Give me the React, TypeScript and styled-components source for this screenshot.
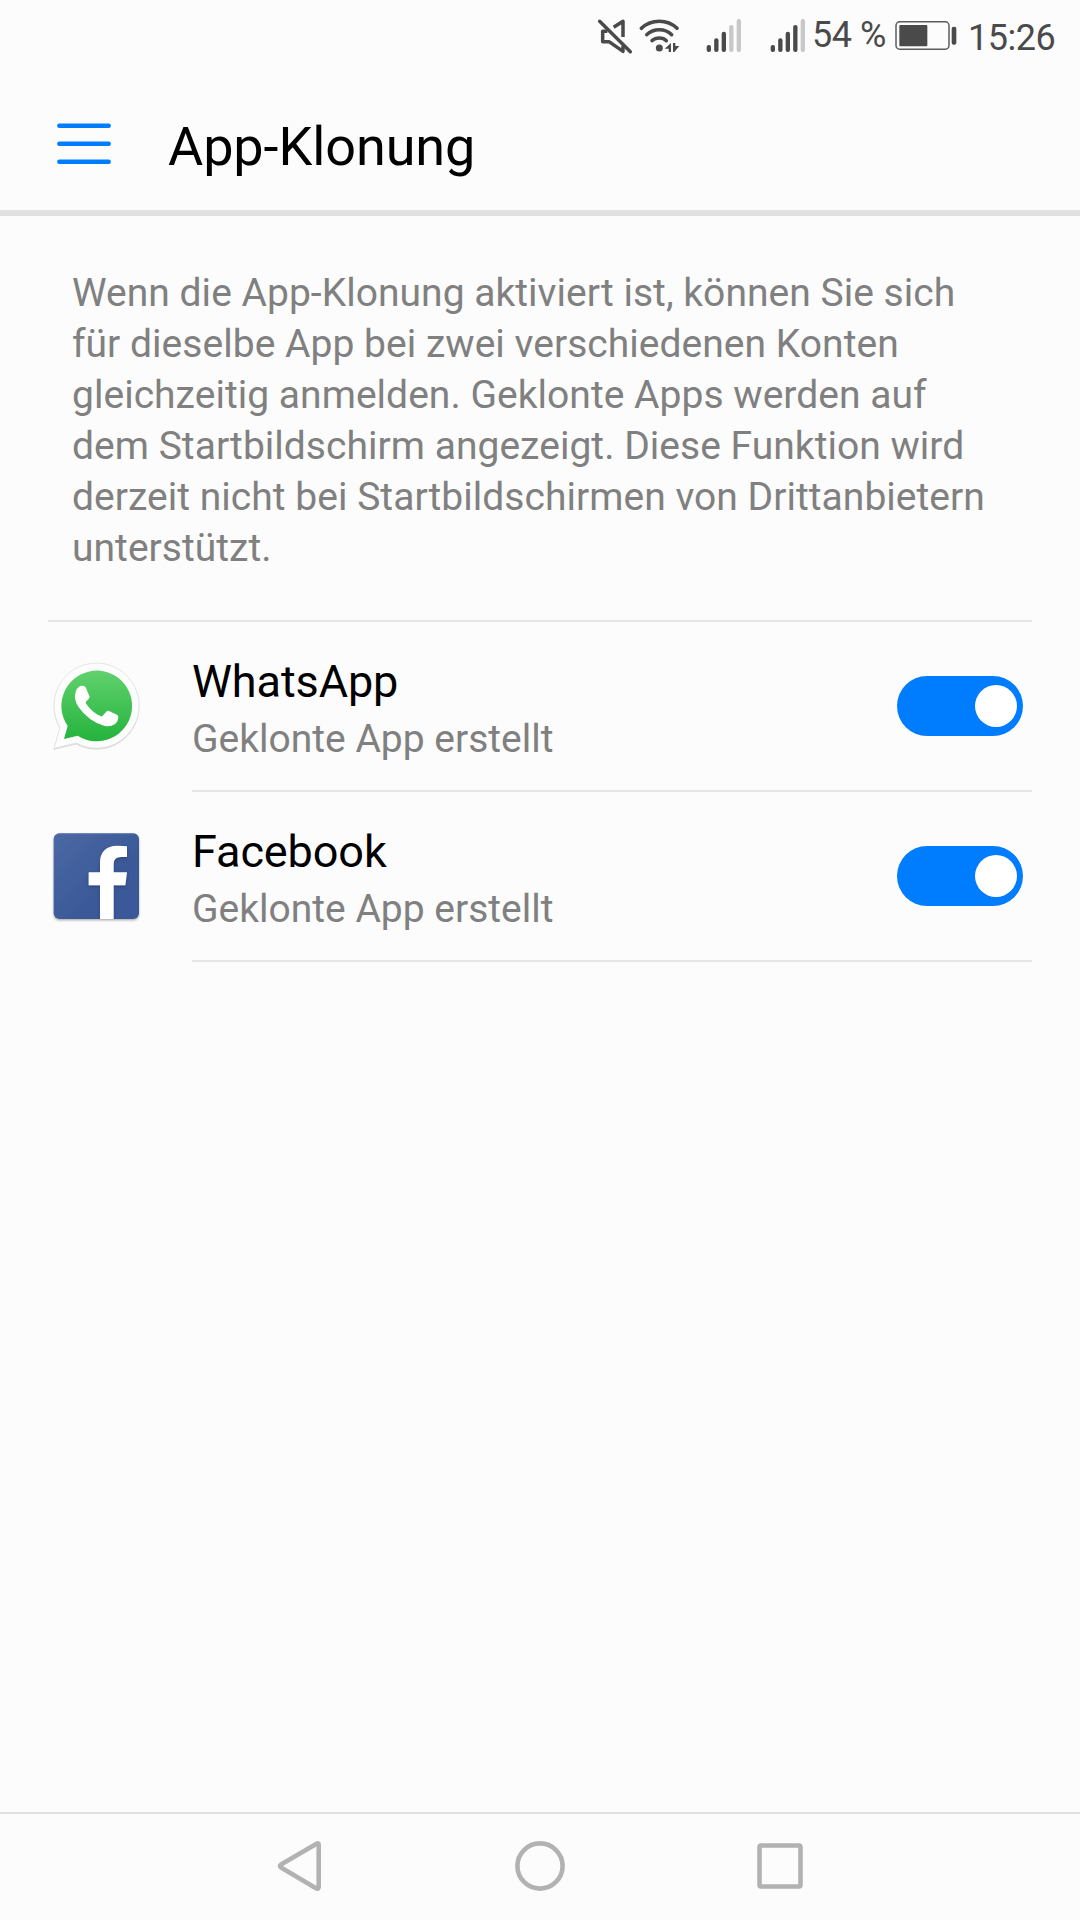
import React, { useState } from 'react';
import styled, { createGlobalStyle } from 'styled-components';

const ink = '#4a4a4a';
const blue = '#007dff';

const GlobalStyle = createGlobalStyle`
  html, body { margin: 0; padding: 0; background: #fcfcfc; }
  * { box-sizing: border-box; }
`;

const Screen = styled.div`
  display: flex;
  flex-direction: column;
  width: 1080px;
  height: 1920px;
  overflow: hidden;
  background: #fcfcfc;
  font-family: Roboto, 'Liberation Sans', sans-serif;
`;

const StatusBar = styled.div`
  display: flex;
  align-items: center;
  height: 72px;
  padding-left: 597px;
  flex: none;
  color: ${ink};
`;

const StatusIcon = styled.svg<{ $w: number; $gap: number }>`
  display: block;
  flex: none;
  width: ${(p) => p.$w}px;
  height: 40px;
  margin-right: ${(p) => p.$gap}px;
`;

const StatusText = styled.span<{ $w: number; $lift?: number; $drop?: number; $spacing?: number }>`
  flex: none;
  width: ${(p) => p.$w}px;
  padding-top: ${(p) => p.$drop ?? 0}px;
  padding-bottom: ${(p) => p.$lift ?? 0}px;
  font-size: 36px;
  line-height: 42px;
  letter-spacing: ${(p) => p.$spacing ?? 0}px;
  white-space: pre;
`;

const Header = styled.header`
  display: flex;
  align-items: flex-start;
  flex: none;
  height: 144px;
  padding: 43px 57px 0;
  border-bottom: 6px solid #e1e1e1;
`;

const MenuButton = styled.button`
  width: 54px;
  height: 54px;
  margin: 0 57px 0 0;
  padding: 0;
  border: 0;
  background: none;

  svg { display: block; }
`;

const Title = styled.h1`
  margin: 0;
  font-size: 54px;
  font-weight: 400;
  line-height: 64px;
  letter-spacing: -0.1px;
  color: #000;
`;

const Content = styled.main`
  flex: 1;
  padding: 0 48px;
`;

const Description = styled.p`
  margin: 0;
  padding: 52px 24px 46px;
  border-bottom: 2px solid #e6e6e6;
  font-size: 39px;
  line-height: 51px;
  letter-spacing: 0.03px;
  color: #808080;
`;

const AppRow = styled.div`
  display: flex;
  align-items: center;
  height: 170px;
`;

const AppIcon = styled.svg`
  display: block;
  flex: none;
  width: 96px;
  height: 96px;
  margin: 0 48px 2px 0;
`;

const RowBody = styled.div`
  display: flex;
  flex: 1;
  align-items: center;
  justify-content: space-between;
  height: 170px;
  padding-right: 9px;
  border-bottom: 2px solid #e6e6e6;
`;

const RowText = styled.div`
  display: flex;
  flex-direction: column;
  gap: 7px;
  height: 102px;
`;

const AppName = styled.div`
  font-size: 45px;
  line-height: 54px;
  letter-spacing: -0.1px;
  color: #000;
`;

const AppState = styled.div`
  font-size: 39px;
  line-height: 46px;
  color: #808080;
`;

const Switch = styled.button<{ $on: boolean }>`
  display: flex;
  align-items: center;
  justify-content: ${(p) => (p.$on ? 'flex-end' : 'flex-start')};
  width: 126px;
  height: 60px;
  padding: 0 6px;
  border: 0;
  border-radius: 30px;
  background: ${(p) => (p.$on ? blue : '#c8c8c8')};
`;

const Knob = styled.span`
  width: 42px;
  height: 42px;
  border-radius: 50%;
  background: #fff;
`;

const NavBar = styled.nav`
  display: flex;
  flex: none;
  height: 108px;
  padding: 0 180px 2px;
  border-top: 2px solid #e1e1e1;
`;

const NavButton = styled.button`
  display: flex;
  flex: 1;
  align-items: center;
  justify-content: center;
  padding: 0;
  border: 0;
  background: none;

  svg { width: 60px; height: 60px; fill: none; stroke: #b2b2b2; stroke-width: 4.6; stroke-linejoin: round; }
`;

function MuteIcon() {
  return (
    <StatusIcon $w={36} $gap={6} viewBox="51 48 108 120" fill="none" stroke={ink} strokeWidth="10.500" strokeLinejoin="round">
      <path d="M59 64L151 155" strokeLinecap="round" />
      <path d="M82 94H68V125H87L129 154V137" />
      <path d="M101 82L129 64V111" />
    </StatusIcon>
  );
}

function WifiIcon() {
  return (
    <StatusIcon $w={42} $gap={24} viewBox="177 48 126 120" fill="none" stroke={ink} strokeWidth="10.500" strokeLinecap="round">
      <path d="M184 85Q207 64 238 64T291 85" />
      <path d="M200 104Q216 89 238 89T275 104" />
      <path d="M216 122Q225 114 238 114T259 122" />
      <circle cx="238" cy="144" r="10.5" fill={ink} stroke="none" />
      <path d="M273 129V156H266V146H254ZM279 129H286V138H298L283 156H279Z" fill={ink} stroke="none" />
    </StatusIcon>
  );
}

function SignalIcon({ level, gap }: { level: number; gap: number }) {
  const tops = [135, 115, 95, 75, 57];
  return (
    <StatusIcon $w={38} $gap={gap} viewBox="375 48 114 120">
      {tops.map((top, i) => (
        <rect key={top} x={380 + i * 22.5} y={top} width="13" height={156 - top} rx="6" fill={i < level ? ink : '#c8c8c8'} />
      ))}
    </StatusIcon>
  );
}

function BatteryIcon() {
  return (
    <StatusIcon $w={62} $gap={11} viewBox="286 48 186 120">
      <rect x="289" y="65.5" width="159" height="82" rx="11" fill="none" stroke="#5c5c5c" strokeWidth="4.500" />
      <rect x="299" y="75" width="84" height="64" rx="3" fill={ink} />
      <rect x="456" y="80" width="14" height="54" rx="6" fill={ink} />
    </StatusIcon>
  );
}

function WhatsAppIcon() {
  return (
    <AppIcon viewBox="54 54 288 288">
      <defs>
        <linearGradient id="waGreen" x1="0" y1="0" x2="0" y2="1">
          <stop offset="0" stopColor="#61d16e" />
          <stop offset="1" stopColor="#24b33c" />
        </linearGradient>
        <filter id="waShadow" x="-10%" y="-10%" width="120%" height="125%">
          <feDropShadow dx="0" dy="2" stdDeviation="2" floodColor="#000" floodOpacity="0.28" />
        </filter>
      </defs>
      <path
        d="M72 325L90 262A127.500 127.500 0 1 1 139 309Z"
        fill="#fdfdfd"
        stroke="#dedede"
        strokeWidth="2"
        filter="url(#waShadow)"
      />
      <path d="M102 297L113 258A106 106 0 1 1 143 287Z" fill="url(#waGreen)" />
      <path
        d="M149 139Q155 136 162 138Q166 139 168 144L179 170Q179 174 168 185Q166 188 169 192Q187 218 211 228Q215 230 218 227L230 214Q233 211 237 213L261 224Q265 226 265 231Q264 247 254 253Q240 262 222 257Q175 243 145 200Q130 178 137 156Q140 145 149 139Z"
        fill="#fff"
      />
    </AppIcon>
  );
}

function FacebookIcon() {
  return (
    <AppIcon viewBox="54 54 288 288">
      <defs>
        <linearGradient id="fbBlue" x1="0" y1="0" x2="1" y2="1">
          <stop offset="0" stopColor="#4c69a4" />
          <stop offset="0.6" stopColor="#3b5998" />
          <stop offset="1" stopColor="#3b5998" />
        </linearGradient>
        <filter id="fbShadow" x="-10%" y="-10%" width="120%" height="125%">
          <feDropShadow dx="0" dy="4" stdDeviation="3" floodColor="#000" floodOpacity="0.32" />
        </filter>
        <filter id="fbMarkShadow" x="-20%" y="-10%" width="140%" height="125%">
          <feDropShadow dx="0" dy="5" stdDeviation="5" floodColor="#1c2f5c" floodOpacity="0.5" />
        </filter>
        <clipPath id="fbTile">
          <rect x="71" y="70" width="256" height="257" rx="17" />
        </clipPath>
      </defs>
      <rect x="71" y="70" width="256" height="257" rx="17" fill="url(#fbBlue)" filter="url(#fbShadow)" />
      <g clipPath="url(#fbTile)">
        <path d="M84 71H314" stroke="#7187b4" strokeWidth="2.500" />
        <path
          d="M210 330V226H176V187H210V157C210 126 229 107 261 107Q280 107 291 109V141H272Q251 141 251 162V187H291L286 226H251V330Z"
          fill="#fff"
          filter="url(#fbMarkShadow)"
        />
      </g>
    </AppIcon>
  );
}

const apps = [
  { name: 'WhatsApp', Icon: WhatsAppIcon },
  { name: 'Facebook', Icon: FacebookIcon },
];

function AppEntry({ name, Icon }: { name: string; Icon: () => React.ReactElement }) {
  const [on, setOn] = useState(true);
  return (
    <AppRow>
      <Icon />
      <RowBody>
        <RowText>
          <AppName>{name}</AppName>
          <AppState>Geklonte App erstellt</AppState>
        </RowText>
        <Switch $on={on} role="switch" aria-checked={on} onClick={() => setOn(!on)}>
          <Knob />
        </Switch>
      </RowBody>
    </AppRow>
  );
}

export default function App() {
  return (
    <Screen>
      <GlobalStyle />
      <StatusBar>
        <MuteIcon />
        <WifiIcon />
        <SignalIcon level={3} gap={26} />
        <SignalIcon level={4} gap={5} />
        <StatusText $w={83} $lift={2} $spacing={-0.5}>54 %</StatusText>
        <BatteryIcon />
        <StatusText $w={100} $drop={4} $spacing={-0.5}>15:26</StatusText>
      </StatusBar>
      <Header>
        <MenuButton>
          <svg width="54" height="54" viewBox="171 75 162 162" stroke={blue} strokeWidth="13.500" strokeLinecap="round">
            <path d="M178 107.500H326M178 161.500H326M178 215.500H326" />
          </svg>
        </MenuButton>
        <Title>App-Klonung</Title>
      </Header>
      <Content>
        <Description>
          Wenn die App-Klonung aktiviert ist, können Sie sich für dieselbe App bei zwei verschiedenen Konten
          gleichzeitig anmelden. Geklonte Apps werden auf dem Startbildschirm angezeigt. Diese Funktion wird derzeit
          nicht bei Startbildschirmen von Drittanbietern unterstützt.
        </Description>
        {apps.map((app) => (
          <AppEntry key={app.name} {...app} />
        ))}
      </Content>
      <NavBar>
        <NavButton>
          <svg viewBox="270 1836 60 60">
            <path d="M317 1843.500Q318.700 1842.500 318.700 1845V1887Q318.700 1889.500 316 1888.200L281 1867.500Q279 1866 281 1864.500Z" />
          </svg>
        </NavButton>
        <NavButton>
          <svg viewBox="510 1836 60 60">
            <circle cx="540" cy="1866" r="22.600" />
          </svg>
        </NavButton>
        <NavButton>
          <svg viewBox="750 1836 60 60">
            <rect x="759.500" y="1845.500" width="41" height="41" rx="1.500" />
          </svg>
        </NavButton>
      </NavBar>
    </Screen>
  );
}
